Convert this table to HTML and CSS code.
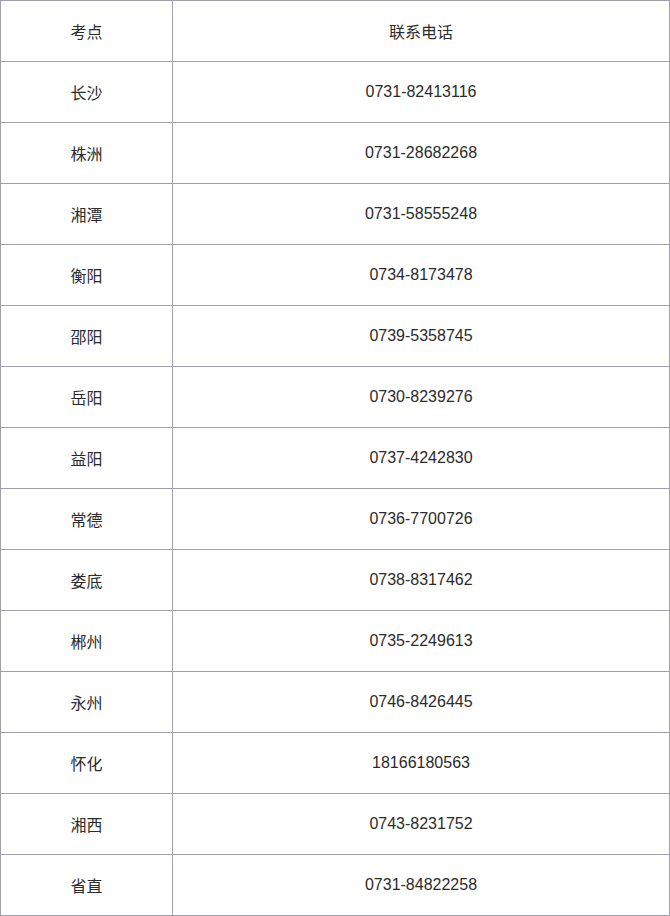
FILE: index.html
```html
<!DOCTYPE html>
<html lang="zh">
<head>
<meta charset="utf-8">
<link rel="stylesheet" href="styles.css">
</head>
<body>
<table class="tbl">
  <colgroup><col class="c1"><col class="c2"></colgroup>
  <tr><td>考点</td><td>联系电话</td></tr>
  <tr><td>长沙</td><td>0731-82413116</td></tr>
  <tr><td>株洲</td><td>0731-28682268</td></tr>
  <tr><td>湘潭</td><td>0731-58555248</td></tr>
  <tr><td>衡阳</td><td>0734-8173478</td></tr>
  <tr><td>邵阳</td><td>0739-5358745</td></tr>
  <tr><td>岳阳</td><td>0730-8239276</td></tr>
  <tr><td>益阳</td><td>0737-4242830</td></tr>
  <tr><td>常德</td><td>0736-7700726</td></tr>
  <tr><td>娄底</td><td>0738-8317462</td></tr>
  <tr><td>郴州</td><td>0735-2249613</td></tr>
  <tr><td>永州</td><td>0746-8426445</td></tr>
  <tr><td>怀化</td><td>18166180563</td></tr>
  <tr><td>湘西</td><td>0743-8231752</td></tr>
  <tr><td>省直</td><td>0731-84822258</td></tr>
</table>
</body>
</html>
```
FILE: styles.css
```css
html, body { margin: 0; padding: 0; background: #fff; }
.tbl {
  width: 670px;
  border-collapse: collapse;
  table-layout: fixed;
  font-family: "Liberation Sans", "Noto Sans CJK SC", sans-serif;
  font-size: 16px;
  color: #2b2b2b;
}
.c1 { width: 172px; }
.tbl td {
  border: 1px solid #a0a0a8;
  height: 61px;
  padding: 0;
  text-align: center;
  vertical-align: middle;
  box-sizing: border-box;
}
```
